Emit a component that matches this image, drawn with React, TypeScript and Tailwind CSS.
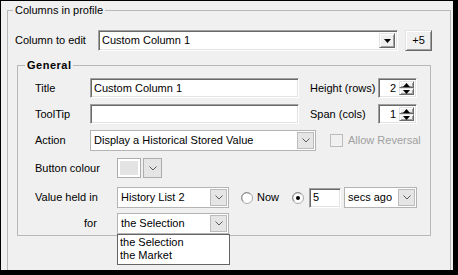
import React from "react";

const sunken =
  "border border-t-[#a0a0a0] border-l-[#a0a0a0] border-r-white border-b-white shadow-[inset_1px_1px_0_#696969,inset_-1px_-1px_0_#e3e3e3] bg-white";
const raised =
  "border border-t-[#e3e3e3] border-l-[#e3e3e3] border-r-[#696969] border-b-[#696969] shadow-[inset_1px_1px_0_#ffffff,inset_-1px_-1px_0_#a0a0a0] bg-[#f0f0f0]";

const Chevron = () => (
  <svg width="8" height="5" viewBox="0 0 8 5">
    <polyline points="0.5,0.5 4,4 7.5,0.5" fill="none" stroke="#5a5a5a" strokeWidth="1" />
  </svg>
);

const Tri = ({ up }: { up?: boolean }) => (
  <svg width="7" height="4" viewBox="0 0 7 4">
    <polygon points={up ? "3.5,0 7,4 0,4" : "0,0 7,0 3.5,4"} fill="#000" />
  </svg>
);

const FlatCombo: React.FC<{ text: string; w: string; children?: React.ReactNode }> = ({ text, w, children }) => (
  <div className={`relative ${w} h-[21px] border border-[#b4b4b4] bg-white flex items-center`}>
    <span className="flex-1 pl-[3px] leading-[13px] truncate">{text}</span>
    <div className="mr-[1px] w-[17px] h-[17px] border border-[#bcbcbc] bg-[#e5e5e5] flex items-center justify-center">
      <Chevron />
    </div>
    {children}
  </div>
);

const Spinner: React.FC<{ value: string }> = ({ value }) => (
  <div className={`${sunken} w-[39px] h-[20px] flex items-stretch p-[2px]`}>
    <span className="flex-1 text-right pr-[3px] leading-[14px]">{value}</span>
    <div className="w-[15px] flex flex-col">
      <div className={`${raised} flex-1 flex items-center justify-center`}>
        <Tri up />
      </div>
      <div className={`${raised} flex-1 flex items-center justify-center`}>
        <Tri />
      </div>
    </div>
  </div>
);

const Radio: React.FC<{ checked?: boolean }> = ({ checked }) => (
  <svg width="12" height="12" viewBox="0 0 12 12">
    <circle cx="6" cy="6" r="5.5" fill="#fff" stroke="#a8a8a8" />
    <path d="M2.2 9.2 A4.6 4.6 0 0 1 9.2 2.2" fill="none" stroke="#8a8a8a" />
    {checked && <circle cx="6" cy="6" r="2" fill="#000" />}
  </svg>
);

export default function App() {
  return (
    <div
      className="w-[458px] h-[275px] bg-black pt-px pl-px text-[11px] text-black"
      style={{ fontFamily: '"Liberation Sans", Arial, sans-serif' }}
    >
      <div className="w-[452px] h-[269px] bg-[#f0f0f0] overflow-hidden">
        <fieldset className="ml-[6px] mt-[3px] w-[444px] h-[300px] border border-[#b8b8b8]">
          <legend className="ml-[5px] px-[2px] leading-[12px]">Columns in profile</legend>

          <div className="mt-[14px] pl-[7px] flex items-center h-[21px]">
            <span className="w-[83px]">Column to edit</span>
            <div className={`${sunken} w-[300px] h-[21px] flex items-center p-[2px]`}>
              <span className="flex-1 pl-[1px] leading-[13px]">Custom Column 1</span>
              <div className={`${raised} w-[16px] h-[15px] flex items-center justify-center`}>
                <Tri />
              </div>
            </div>
            <button className={`${raised} ml-[7px] w-[27px] h-[21px] flex items-center justify-center leading-[13px]`}>
              +5
            </button>
          </div>

          <fieldset className="ml-[9px] mt-[8px] w-[414px] h-[177px] border border-[#b8b8b8]">
            <legend className="ml-[7px] px-[2px] leading-[13px] font-bold tracking-[0.5px]">General</legend>

            <div className="mt-[6px] pl-[17px] flex items-center h-[20px]">
              <span className="w-[55px]">Title</span>
              <div className={`${sunken} w-[209px] h-[20px] flex items-center pl-[3px]`}>Custom Column 1</div>
              <span className="ml-[11px] w-[68px]">Height (rows)</span>
              <Spinner value="2" />
            </div>

            <div className="mt-[6px] pl-[17px] flex items-center h-[20px]">
              <span className="w-[55px]">ToolTip</span>
              <div className={`${sunken} w-[209px] h-[20px]`} />
              <span className="ml-[11px] w-[68px]">Span (cols)</span>
              <Spinner value="1" />
            </div>

            <div className="mt-[6px] pl-[17px] flex items-center h-[21px]">
              <span className="w-[55px]">Action</span>
              <FlatCombo text="Display a Historical Stored Value" w="w-[226px]" />
              <div className="ml-[14px] w-[13px] h-[13px] border border-[#bcbcbc] bg-[#f0f0f0]" />
              <span className="ml-[5px] text-[#a0a0a0]">Allow Reversal</span>
            </div>

            <div className="mt-[7px] pl-[17px] flex items-center h-[20px]">
              <span className="w-[82px]">Button colour</span>
              <div className="w-[24px] h-[20px] border border-[#adadad] bg-white p-[2px]">
                <div className="w-full h-full bg-[#e3e3e3]" />
              </div>
              <div className="ml-[2px] w-[19px] h-[20px] border border-[#adadad] bg-[#e5e5e5] flex items-center justify-center">
                <Chevron />
              </div>
            </div>

            <div className="mt-[9px] pl-[17px] flex items-center h-[21px]">
              <span className="w-[82px]">Value held in</span>
              <FlatCombo text="History List 2" w="w-[112px]" />
              <span className="ml-[12px]">
                <Radio />
              </span>
              <span className="ml-[4px]">Now</span>
              <span className="ml-[13px]">
                <Radio checked />
              </span>
              <div className={`${sunken} ml-[5px] w-[32px] h-[20px] flex items-center pl-[3px]`}>5</div>
              <div className="ml-[3px]">
                <FlatCombo text="secs ago" w="w-[73px]" />
              </div>
            </div>

            <div className="mt-[5px] pl-[17px] flex items-center h-[21px]">
              <span className="w-[82px] pl-[49px]">for</span>
              <FlatCombo text="the Selection" w="w-[112px]">
                <div className="absolute z-10 left-[-1px] top-[20px] w-[113px] h-[31px] border border-[#646464] bg-white pl-[2px] pt-[1px] leading-[13px]">
                  <div>the Selection</div>
                  <div>the Market</div>
                </div>
              </FlatCombo>
            </div>
          </fieldset>
        </fieldset>
      </div>
    </div>
  );
}
